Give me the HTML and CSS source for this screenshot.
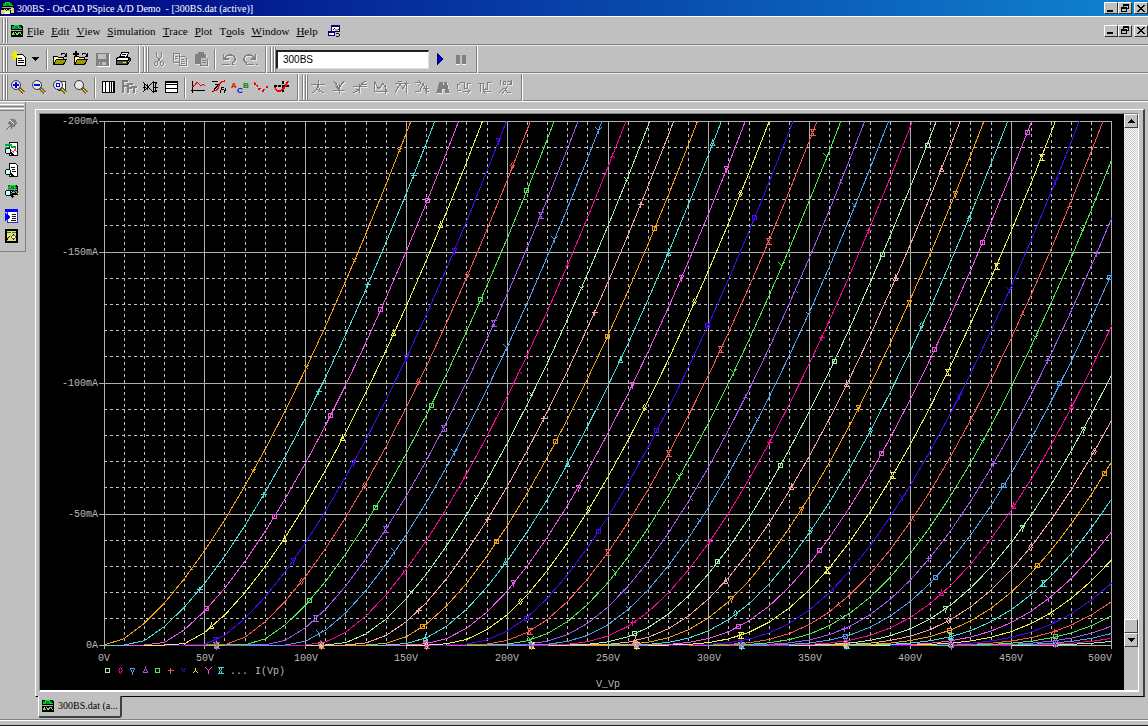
FILE: index.html
```html
<!DOCTYPE html>
<html lang="en">
<head>
<meta charset="utf-8">
<title>300BS - OrCAD PSpice A/D Demo</title>
<link rel="stylesheet" href="styles.css">
</head>
<body>
<svg class="defs" aria-hidden="true">
  <defs>
    <symbol id="i-wave" viewBox="0 0 16 16"><path fill="#000" d="M1 1h12l2 2v12H1z"/><path fill="#084" d="M2 2h10v4H2z"/><path fill="none" stroke="#0f0" d="M2 5h3V2h5v3h4"/><path fill="none" stroke="#ff0" d="M2 13l3-4 3 3 3-2 3 3"/><path fill="none" stroke="#0ff" d="M2 10l4 3 4-4 3 1"/><path stroke="#c0c0c0" d="M1 7.500h13"/></symbol>
    <symbol id="i-restore" viewBox="0 0 10 9"><path fill="none" stroke="#000" d="M3.500 3V.5h5v4H7M1.500 3.500h5v4h-5z"/><path stroke="#000" d="M3 1.500h6M1 4.500h6"/></symbol>
    <symbol id="i-close" viewBox="0 0 10 9"><path stroke="#000" stroke-width="1.600" d="M1.500 1l7 7M8.500 1l-7 7"/></symbol>
    <symbol id="i-min" viewBox="0 0 10 9"><path fill="#000" d="M1 6h6v2H1z"/></symbol>
    <symbol id="i-folder" viewBox="0 0 16 16"><path fill="#ffffa0" stroke="#000" d="M1.500 13.500v-8h4l1 1h5v2"/><path fill="#9c9c00" stroke="#000" d="M1.500 13.500l3-5h10l-3 5z"/><path fill="none" stroke="#000" d="M9 3.500q3-3 5 1M14.500 2v3h-3"/></symbol>
    <symbol id="i-mag" viewBox="0 0 16 16"><path stroke="#806020" stroke-width="3" d="M9 9l5 5"/><path stroke="#ffe080" d="M10 10l4 4"/><circle cx="6" cy="6" r="4.500" fill="#e8e8e8" stroke="#333" shape-rendering="auto"/></symbol>
    <symbol id="i-peek" viewBox="0 0 16 16"><circle cx="4.500" cy="10" r="3" fill="#cff" stroke="#000"/><path stroke="#000" stroke-width="2" d="M7 12l3 3"/></symbol>
  </defs>
</svg>

<header class="title">
  <svg class="ic" viewBox="0 0 16 16"><use href="#i-wave" width="16" height="16"/><path fill="#e0d860" d="M0 10h6v5H0zM11 8h4v6h-4z"/><path fill="#fff" d="M5 11h5v4H5z"/></svg>
  <h1>300BS - OrCAD PSpice A/D Demo&nbsp; - [300BS.dat (active)]</h1>
  <div class="winbtns">
    <button aria-label="Minimize"><svg><use href="#i-min"/></svg></button><button aria-label="Restore"><svg><use href="#i-restore"/></svg></button><button class="gap" aria-label="Close"><svg><use href="#i-close"/></svg></button>
  </div>
</header>

<nav class="menu">
  <i class="grip"></i>
  <svg class="ic"><use href="#i-wave"/></svg>
  <button><u>F</u>ile</button><button><u>E</u>dit</button><button><u>V</u>iew</button><button><u>S</u>imulation</button><button><u>T</u>race</button><button><u>P</u>lot</button><button>T<u>o</u>ols</button><button><u>W</u>indow</button><button><u>H</u>elp</button>
  <svg class="ic" viewBox="0 0 16 16"><path fill="#008" d="M5 1h10v8H5zM1 8h8v6H1z"/><path fill="#fff" d="M6 3h8v5H6zM2 10h6v3H2z"/><path fill="none" stroke="#000" d="M6 7l3-3 3 3 2-2M10 11h4v3h-4"/><path fill="#bb0" d="M3 11h2v2H3zM9 6h3v2H9z"/></svg>
  <div class="winbtns">
    <button aria-label="Minimize document"><svg><use href="#i-min"/></svg></button><button aria-label="Restore document"><svg><use href="#i-restore"/></svg></button><button class="gap" aria-label="Close document"><svg><use href="#i-close"/></svg></button>
  </div>
</nav>

<div class="bar">
  <i class="grip"></i>
  <div class="set n1"><button aria-label="New"><svg viewBox="0 0 16 16"><path fill="#fff" stroke="#000" d="M5.500 3.500h6l3 3v8h-9z"/><path stroke="#000" d="M7 7.500h4M7 9.500h6M7 11.500h6"/><path stroke="#ee0" stroke-width="1.500" d="M4 0v9M0 4.500h8M1 1.500l6 6M7 1.500l-6 6"/></svg></button></div>
  <button class="drop" aria-label="New options"><svg viewBox="0 0 8 16"><path d="M0 6h7l-3.500 4z"/></svg></button>
  <i class="sep"></i>
  <div class="set n4">
    <button aria-label="Open"><svg><use href="#i-folder"/></svg></button>
    <button aria-label="Append"><svg viewBox="0 0 16 16"><use href="#i-folder" width="16" height="16"/><path stroke="#000" stroke-width="2" d="M0 3h6M3 0v6"/></svg></button>
    <button aria-label="Save"><svg viewBox="0 0 16 16"><path fill="#808080" d="M2 2h13v13H2z"/><path fill="#c0c0c0" d="M4 3h8v5H4zM5 11h7v3H5z"/><path fill="#808080" d="M6 11h2v3H6z"/><path stroke="#fff" d="M3 15.500h12.500V3" fill="none"/></svg></button>
    <button aria-label="Print"><svg viewBox="0 0 16 16"><path fill="#fff" stroke="#000" d="M4.500 7l2-5.500h7l-2 5.500M1.500 7.500l2-1h11l-2 4h-11z"/><path fill="#555" stroke="#000" d="M1.500 9.500h11v4h-11zM12.500 13l2.500-3V7"/><path stroke="#ee0" d="M8 11.500h3"/><path stroke="#000" d="M7 3.500h4M6 5.500h4"/></svg></button>
  </div>
  <i class="end"></i><i class="grip"></i>
  <div class="set n3 dim">
    <button aria-label="Cut"><svg viewBox="0 0 16 16"><path d="M5.500 1v4l4 6M10.500 1v4l-4 6"/><circle cx="5" cy="12.500" r="1.800"/><circle cx="11" cy="12.500" r="1.800"/></svg></button>
    <button aria-label="Copy"><svg viewBox="0 0 16 16"><path d="M1.500 2.500h6v9h-6zM7.500 5.500h5l2 2v7h-7zM3 5.500h3M3 7.500h3M9 8.500h3M9 10.500h4M9 12.500h4"/></svg></button>
    <button aria-label="Paste"><svg viewBox="0 0 16 16"><path fill="#808080" d="M2.500 3.500h10v9h-10zM5 1.500h5v2H5z"/><path fill="#c0c0c0" d="M7.500 6.500h5l2 2v6h-7zM9 9.500h4M9 11.500h4"/></svg></button>
  </div>
  <i class="sep"></i>
  <div class="set n2 dim">
    <button aria-label="Undo"><svg viewBox="0 0 16 16"><path stroke-width="1.500" d="M2.500 3v5h5M3 8q3-5 7-4t4 4-3 4M1 13.500h8M11 13.500h3"/></svg></button>
    <button aria-label="Redo"><svg viewBox="0 0 16 16"><path stroke-width="1.500" d="M13.500 3v5h-5M13 8q-3-5-7-4T2 8t3 4M4 13.500h8M14 13.500h2"/></svg></button>
  </div>
  <i class="end"></i><i class="grip"></i>
  <input class="profile" type="text" aria-label="Simulation profile" value="300BS">
  <div class="set n2">
    <button aria-label="Run"><svg viewBox="0 0 16 16"><path fill="#0000c0" stroke="#000060" d="M5 2l6 6-6 6z"/></svg></button>
    <button aria-label="Pause"><svg viewBox="0 0 16 16"><path fill="#808080" d="M3 4h4v9H3zM9 4h4v9H9z"/><path stroke="#fff" d="M3 13.500h4M9 13.500h4"/></svg></button>
  </div>
  <i class="end"></i>
</div>

<div class="bar">
  <i class="grip"></i>
  <div class="set n4">
    <button aria-label="Zoom in"><svg viewBox="0 0 16 16"><use href="#i-mag" width="16" height="16"/><path stroke="#00f" stroke-width="2" d="M3 6h6M6 3v6"/></svg></button>
    <button aria-label="Zoom out"><svg viewBox="0 0 16 16"><use href="#i-mag" width="16" height="16"/><path stroke="#00f" stroke-width="2" d="M3 6h6"/></svg></button>
    <button aria-label="Zoom area"><svg viewBox="0 0 16 16"><path fill="#fff" stroke="#333" d="M6 2.500h7.500v9H6"/><use href="#i-mag" width="16" height="16"/><path fill="#fff" stroke="#00f" d="M4.500 4.500h3v3h-3z"/></svg></button>
    <button aria-label="Zoom fit"><svg><use href="#i-mag"/></svg></button>
  </div>
  <i class="sep"></i>
  <div class="set n4">
    <button aria-label="Log X axis"><svg viewBox="0 0 16 16"><path fill="#fff" stroke="#000" d="M2.500 2.500h12v11h-12z"/><path fill="none" stroke="#000" d="M5.500 3v10M9.500 3v10M11.500 3v10M13 3v10"/></svg></button>
    <button class="dim" aria-label="Fourier"><svg viewBox="0 0 16 16"><path stroke-width="2" d="M2 14V2h5M2 7h4M7 14V5h5M7 9h4M13 14V8M10 8h6"/></svg></button>
    <button aria-label="Performance analysis"><svg viewBox="0 0 16 16"><path fill="none" stroke="#000" stroke-width="1.300" d="M1 3l5 5 5 5 4-1M1 13l5-5 5-5 4 1"/><path fill="none" stroke="#000" d="M2.500 5v6M13.500 3v10M5.500 5v6M11.500 3v10M1 8h3M12 8h4"/></svg></button>
    <button aria-label="Log Y axis"><svg viewBox="0 0 16 16"><path fill="#fff" stroke="#000" d="M2.500 2.500h12v11h-12z"/><path stroke="#000" d="M3 3.500h11M3 5.500h11M3 9.500h11"/></svg></button>
  </div>
  <i class="sep"></i>
  <div class="set n5">
    <button aria-label="Add trace"><svg viewBox="0 0 16 16"><path fill="none" stroke="#000" d="M2.500 2v12M1 11.500h14"/><path fill="none" stroke="#e00" stroke-width="1.300" d="M2 8l3-2 2-3 4 4 2-2 2 2"/></svg></button>
    <button aria-label="Evaluate"><svg viewBox="0 0 16 16"><path fill="none" stroke="#000" d="M1 2.500h6M4 5.500h5M1 13l8-9M9 14l2-6h2M9.500 10h3M13 14l2-5"/><path fill="none" stroke="#e00" stroke-width="1.300" d="M2 12q5 0 6-5t6-5"/></svg></button>
    <button aria-label="Text label"><svg class="abc" viewBox="0 0 18 16"><text x="0" y="9" fill="#e00">A</text><text x="6" y="14" fill="#00c">C</text><text x="12" y="9" fill="#080">B</text></svg></button>
    <button aria-label="Mark data points"><svg viewBox="0 0 16 16"><path stroke="#e00" stroke-dasharray="2 2" fill="none" d="M1 3l5 6 4 2 5-3"/><path fill="#e00" d="M1 4h2v2H1zM5 9h2v2H5zM9 11h2v2H9zM13 7h2v2h-2z"/></svg></button>
    <button aria-label="Toggle cursor"><svg viewBox="0 0 16 16"><path stroke="#000" stroke-dasharray="3 1" stroke-width="1.500" d="M0 7h16M9 2v11"/><path fill="none" stroke="#e00" stroke-width="1.500" d="M1 8q1 5 5 4t8-10"/></svg></button>
  </div>
  <i class="end"></i><i class="grip"></i>
  <div class="set n10 dim">
    <button aria-label="Cursor peak"><svg viewBox="0 0 16 16"><path d="M1 5.500h14M8 1v5M2 14q5-2 6-8 1 6 6 8M6 9l4 4"/></svg></button>
    <button aria-label="Cursor trough"><svg viewBox="0 0 16 16"><path d="M2 2q5 3 6 9 1-6 6-9M8 5v10M2 11.500h12M4 6l4 5"/></svg></button>
    <button aria-label="Cursor slope"><svg viewBox="0 0 16 16"><path d="M1 7.500h14M7 5v9M1 14q6-2 7-6t6-6M9 5h6M4 10l3 2"/></svg></button>
    <button aria-label="Cursor min"><svg viewBox="0 0 16 16"><path d="M1 2l5 8 4-6 4 8M1 12.500h14M12 6v9M1 4v8"/></svg></button>
    <button aria-label="Cursor max"><svg viewBox="0 0 16 16"><path d="M1 4.500h14M1 14l5-9 3 5 4-8M12 2v12M4 2h4"/></svg></button>
    <button aria-label="Cursor point"><svg viewBox="0 0 16 16"><path d="M1 3.500h6M4 1l3 3-3 3M1 12h5l3-8 3 8h3M9 9h6M12 6v9"/></svg></button>
    <button aria-label="Cursor search"><svg viewBox="0 0 16 16"><path fill="#808080" d="M5 3h2v3h2V3h2l3 10h-4v-4H6v4H2z"/></svg></button>
    <button aria-label="Next transition"><svg viewBox="0 0 16 16"><path d="M1 10V5h3M4 3h4v6h3V4h4M7 12h7M11 9l3 3-3 3M1 11h4"/></svg></button>
    <button aria-label="Previous transition"><svg viewBox="0 0 16 16"><path d="M1 4h5v6h4V3h5M14 12H6M9 9l-3 3 3 3M3 4v9"/></svg></button>
    <button aria-label="Mark label"><svg viewBox="0 0 16 16"><path d="M3 1q-2 2 0 5M13 1q2 2 0 5M5 2h2v3H5zM9 2h3v3H9M1 14l5-5 4 5 3-1M10 7l-6 8"/></svg></button>
  </div>
  <i class="end"></i>
</div>

<main class="work">
  <aside class="side">
    <i class="hgrip"></i>
    <button aria-label="Pin"><svg viewBox="0 0 16 16"><path fill="#808080" d="M7 3h5l2 4-3 4H7L4 7z"/><path stroke="#fff" d="M7 4l3 4"/><path stroke="#606060" d="M6 10l-4 4M8 10v3"/></svg></button>
    <button class="wide" aria-label="View schematic"><svg viewBox="0 0 16 16"><path fill="#fff" stroke="#000" d="M5.500 1.500h9v13h-9z"/><path fill="none" stroke="#e44" d="M8 9l2 3 2-5 1 4"/><path stroke="#0a4" stroke-width="2" d="M1 4h8M7 6h6M1 7h4"/><use href="#i-peek" width="16" height="16"/></svg></button>
    <button aria-label="View netlist"><svg viewBox="0 0 16 16"><path fill="#fff" stroke="#000" d="M5.500 1.500h7l2 2v11h-9z"/><path stroke="#000" d="M7 5.500h5M8 7.500h4M9 9.500h4"/><use href="#i-peek" width="16" height="16"/></svg></button>
    <button aria-label="View results"><svg viewBox="0 0 16 16"><use href="#i-wave" x="3" width="13" height="14"/><use href="#i-peek" width="16" height="16"/></svg></button>
    <button class="wide" aria-label="View output"><svg viewBox="0 0 16 16"><path fill="#fff" stroke="#22a" d="M3.500 2.500h11v12h-11z"/><path fill="#00f" d="M1 1h14v3H1zM1 4l6 5-6 5z"/><path stroke="#000" d="M8 6.500h5M8 8.500h5M8 10.500h5M7 12.500h6"/></svg></button>
    <button class="tight" aria-label="Edit profile"><svg viewBox="0 0 16 16"><path fill="#e8e060" stroke="#000" stroke-width="2" d="M2 2h12v12H2z"/><path stroke="#084" d="M3 4.500h4M9 4.500h4"/><path fill="none" stroke="#000" d="M10 6v6M7 9h6M3 12l3-4"/><circle cx="10" cy="9" r="2" fill="#fff" stroke="#555"/></svg></button>
  </aside>
  <div class="doc">
    <div class="child">
      <div class="view">
        <svg class="plot" id="plot" viewBox="40 114 1084 576" role="img" aria-label="Plate current I(Vp) versus V_Vp"></svg>
        <div class="scroll">
          <button aria-label="Scroll up"><svg viewBox="0 0 8 8"><path d="M0 6h8L4 2z"/></svg></button>
          <div class="track"><div class="thumb"></div></div>
          <button aria-label="Scroll down"><svg viewBox="0 0 8 8"><path d="M0 2h8L4 6z"/></svg></button>
        </div>
      </div>
    </div>
    <div class="tabs"><button class="tab"><svg class="ic"><use href="#i-wave"/></svg>300BS.dat (a...</button></div>
  </div>
</main>
<footer class="status"></footer>
<script src="plot.js"></script>
</body>
</html>
```
FILE: styles.css
```css
* { box-sizing: border-box; }
body {
  margin: 0;
  height: 100vh;
  display: flex;
  flex-direction: column;
  overflow: hidden;
  background: #c0c0c0;
  color: #000;
  font: 10px "Liberation Serif", serif;
}
button { margin: 0; padding: 0; border: 0; background: none; font: inherit; color: inherit; display: flex; align-items: center; justify-content: center; }
svg { display: block; shape-rendering: crispEdges; }
.defs { position: absolute; width: 0; height: 0; }
.ic { width: 14px; height: 14px; flex: none; }

.title {
  display: flex;
  align-items: center;
  height: 16px;
  flex: none;
  padding-left: 1px;
  gap: 2px;
  background: linear-gradient(90deg, #000080, #1084d0);
  color: #fff;
}
.title h1 { margin: 0; font-size: 10px; font-weight: normal; white-space: nowrap; }

.winbtns { display: flex; margin-left: auto; }
.winbtns button {
  width: 14px;
  height: 12px;
  background: #c0c0c0;
  border: 1px solid;
  border-color: #fff #303030 #303030 #fff;
}
.winbtns .gap { margin-left: 2px; }
.winbtns svg { width: 10px; height: 9px; }

.menu {
  display: flex;
  align-items: center;
  height: 29px;
  flex: none;
  padding-left: 2px;
  border-top: 1px solid #fff;
  border-bottom: 1px solid #808080;
  font-size: 11px;
}
.menu .ic { margin-left: 2px; }
.menu > button { margin-left: 7px; }
.menu > .ic + button { margin-left: 3px; }
.menu > button + .ic { margin-left: 9px; }

.grip {
  width: 6px;
  height: 25px;
  flex: none;
  border: solid;
  border-width: 0 1px;
  border-color: #808080;
  background: linear-gradient(90deg, #fff 0 1px, #c0c0c0 1px 2px, #808080 2px 3px, #fff 3px 4px);
}
.bar {
  display: flex;
  align-items: center;
  height: 28px;
  flex: none;
  padding-left: 2px;
  border-top: 1px solid #e8e8e8;
  border-bottom: 1px solid #808080;
}
.bar .sep { width: 2px; height: 21px; margin: 0 2px 0 3px; border-left: 1px solid #808080; border-right: 1px solid #fff; }
.bar .end { width: 2px; height: 27px; margin: 0 3px 0 5px; border-left: 1px solid #808080; border-right: 1px solid #fff; }
.bar .set { display: flex; }
.set > button { flex: 1; }
.set svg { width: 16px; height: 16px; }
.n1 { width: 21px; }
.n2 { width: 42px; }
.n3 { width: 62px; }
.n4 { width: 83px; }
.n5 { width: 104px; }
.n10 { width: 208px; }
.drop { width: 14px; }
.drop svg { width: 8px; height: 16px; }
.dim path, .dim circle { stroke: #808080; }
.dim svg { fill: none; filter: drop-shadow(1px 1px 0 #e8e8e8); }
.set .abc { width: 18px; font: bold 8px "Liberation Sans", sans-serif; }
.profile {
  width: 153px;
  height: 19px;
  padding: 0 5px;
  border: 1px solid;
  border-width: 2px 1px 1px 2px;
  border-color: #202020 #e0e0e0 #e0e0e0 #202020;
  background: #fff;
  font: 10px "Liberation Sans", sans-serif;
}

.work { flex: 1; display: flex; min-height: 0; border-top: 1px solid #fff; }
.side {
  width: 26px;
  display: flex;
  flex-direction: column;
  align-items: center;
  align-self: flex-start;
  padding: 2px 2px 7px 0;
  border-right: 1px solid #808080;
  border-bottom: 1px solid #808080;
}
.side button { margin-top: 5px; }
.side .wide { margin-top: 9px; }
.side .tight { margin-top: 4px; }
.side svg { width: 15px; height: 16px; }
.hgrip {
  width: 24px;
  height: 7px;
  background: linear-gradient(#fff 0 1px, #c0c0c0 1px 2px, #808080 2px 3px, #c0c0c0 3px 4px, #fff 4px 5px, #c0c0c0 5px 6px, #808080 6px 7px);
}
.doc { flex: 1; min-width: 0; display: flex; flex-direction: column; margin: 7px 3px 0 9px; }
.child {
  flex: 1;
  min-height: 0;
  display: flex;
  padding: 3px 4px 4px 3px;
  border: solid;
  border-width: 1px 2px 1px 1px;
  border-color: #fff #404040 #000 #fff;
}
.view {
  flex: 1;
  min-width: 0;
  display: flex;
  border: solid;
  border-width: 1px 1px 2px 1px;
  border-color: #808080 #fff #fff #808080;
}
.plot { flex: 1; min-width: 0; width: 100%; height: 100%; background: #000; font: 10px "Liberation Mono", monospace; fill: #b8b8b8; }
.grid { stroke: #b0b0b0; fill: none; }
.minor { stroke: #c0c0c0; stroke-dasharray: 3 3; fill: none; }
.scroll { width: 14px; flex: none; display: flex; flex-direction: column; padding-bottom: 43px; }
.scroll button, .thumb {
  height: 14px;
  flex: none;
  background: #c0c0c0;
  border: 1px solid;
  border-color: #fff #404040 #404040 #fff;
}
.scroll svg { width: 8px; height: 8px; }
.track { flex: 1; display: flex; flex-direction: column; justify-content: flex-end; background: repeating-conic-gradient(#fff 0 25%, #c8c8c8 0 50%) 0 0 / 2px 2px; }
.tabs { display: flex; height: 23px; flex: none; margin-top: -1px; padding-left: 3px; }
.tab {
  position: relative;
  gap: 3px;
  height: 22px;
  padding: 0 2px 1px 2px;
  background: #c0c0c0;
  border: solid;
  border-width: 0 2px 2px 1px;
  border-color: #404040 #404040 #404040 #fff;
  border-radius: 0 0 3px 3px;
  white-space: nowrap;
}
.status { height: 7px; flex: none; border-top: 1px solid #808080; border-bottom: 1px solid #202020; box-shadow: inset 0 1px #fff; }
```
FILE: plot.js
```js
// Plate characteristics of a 300B triode: one curve for every 3 V of grid bias.
const X0 = 104, Y0 = 645, PX_V = 2.016, PX_MA = 2.62, CURVES = 47;
const COLORS = ['#f5a010', '#48dcd8', '#ee55ee', '#f0f050', '#4808f0', '#f05850',
  '#50e850', '#a058f0', '#50a0f0', '#f00898', '#a8f0a8', '#f0a8a0'];
const MARKS = [
  'M-2-2L2 2M2-2L-2 2',
  'M-3 0H3M0-3V3',
  'M-2-2H2V2H-2Z',
  'M-2 2H2L0-3Z',
  'M-2-2H2L0 3Z',
  'M0-3L2 0L0 3L-2 0Z',
  'M-2-2H2V2H-2Z',
  'M-3-3H3M-3 3H3M-2-3L2 3M2-3L-2 3',
  'M-3-3L0 0L3-3M0 0V3',
  'M-3 3L0 0L3 3M0 0V-3'
];
const px = v => X0 + v * PX_V;
const py = i => Y0 - i * PX_MA;

function current(vp, vg) {
  const mu = 3.95, kp = 60;
  const eff = vp ? mu * vp / kp * Math.log(1 + Math.exp(kp * (1 / mu - vg / vp))) : 0;
  return 200 * Math.pow(Math.max(0, eff - 2) / 150.3, 1.5);
}
const line = (x1, y1, x2, y2, cls) =>
  `<path class="${cls}" d="M${x1} ${y1}L${x2} ${y2}"/>`;
const text = (x, y, s, anchor) => `<text x="${x}" y="${y}" text-anchor="${anchor}">${s}</text>`;
const mark = (x, y, n) =>
  `<path transform="translate(${Math.floor(x) + .5} ${Math.floor(y) + .5})" fill="none" stroke="${COLORS[n % 12]}" d="${MARKS[n % 10]}"/>`;

let out = '<defs><clipPath id="area"><path d="M104 121H1112V646H104Z"/></clipPath></defs>';
for (let v = 0; v <= 500; v += 10) {
  const x = Math.min(1111, Math.floor(px(v))) + .5, major = v % 50 === 0;
  out += line(x, 121.5, x, major ? 649 : 645, major ? 'grid' : 'minor');
}
for (let i = 0; i <= 200; i += 10) {
  const y = Math.floor(py(i)) + .5, major = i % 50 === 0;
  out += line(major ? 99 : X0, y, 1112, y, major ? 'grid' : 'minor');
}

let curves = '', marks = '';
for (let n = CURVES - 1; n >= 0; n--) {
  const pts = [];
  for (let v = 0; v <= 500; v += 10) pts.push([px(v), py(current(v, 3 * n))]);
  curves += `<polyline fill="none" stroke="${COLORS[n % 12]}" points="${pts.map(p => p[0].toFixed(1) + ',' + p[1].toFixed(1)).join(' ')}"/>`;
  let left = 112;
  for (let k = 1; k < pts.length; k++) {
    const [ax, ay] = pts[k - 1];
    const [bx, by] = pts[k];
    const full = Math.hypot(bx - ax, (by - ay) * .87);
    let at = 0;
    while (full - at >= left) {
      at += left;
      const t = at / full, mx = ax + (bx - ax) * t, my = ay + (by - ay) * t;
      if (my > 121) marks += mark(mx, my, n);
      left = 105;
    }
    left -= full - at;
  }
}
out += `<g clip-path="url(#area)">${curves}</g>${marks}`;

for (let i = 0; i <= 200; i += 50) out += text(98, Math.round(py(i)) + 3, i ? `-${i}mA` : '0A', 'end');
for (let v = 0; v < 500; v += 50) out += text(Math.round(px(v)), 661, v + 'V', 'middle');
out += text(1112, 661, '500V', 'end') + text(608, 687, 'V_Vp', 'middle');
for (let k = 0; k < 10; k++) out += mark(107 + Math.round(k * 12.6), 670, CURVES - 1 - k);
out += text(230, 674, '...', 'start') + text(255, 674, 'I(Vp)', 'start');
document.getElementById('plot').innerHTML = out;
```
